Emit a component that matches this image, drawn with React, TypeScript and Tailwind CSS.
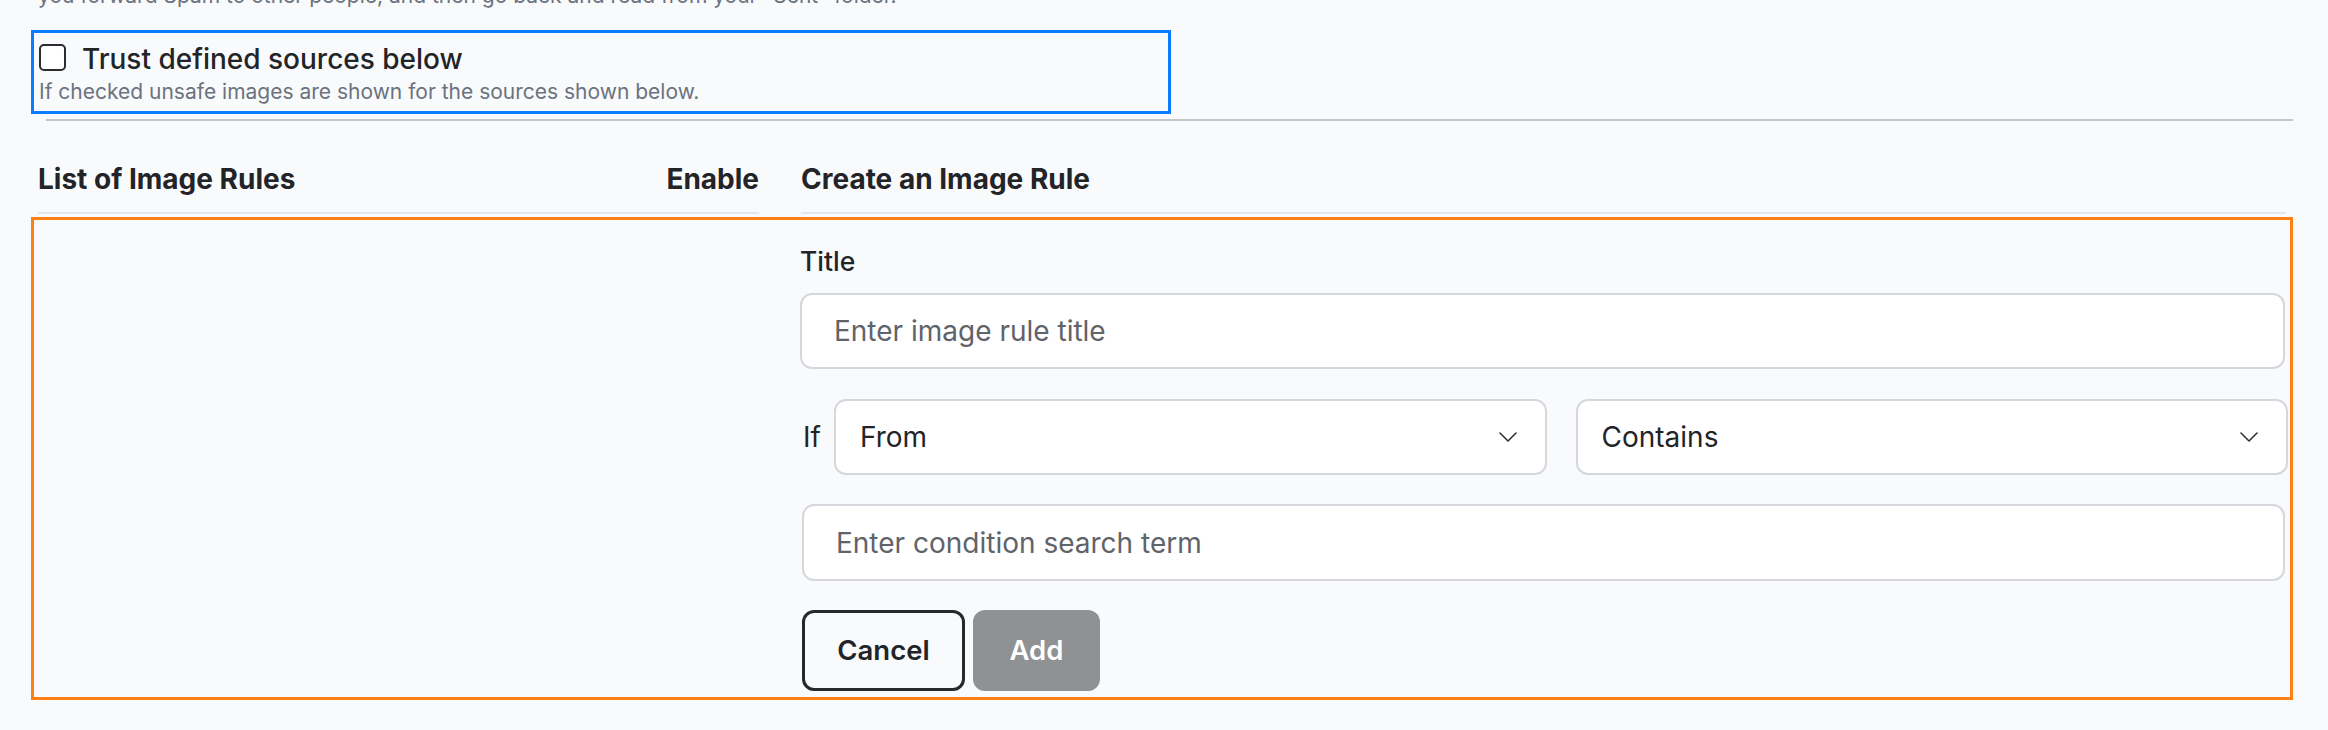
import React from 'react';

function Chevron() {
  return (
    <svg width="18" height="10" viewBox="0 0 18 10" fill="none" className="shrink-0">
      <path d="M1 1 L9 9 L17 1" stroke="#2f3033" strokeWidth="1.6" strokeLinecap="round" strokeLinejoin="round" />
    </svg>
  );
}

function SelectBox({ value }: { value: string }) {
  return (
    <div className="flex h-[76px] flex-1 items-center justify-between rounded-[12px] border-2 border-[#d5d7dc] bg-white pl-[24px] pr-[28px]">
      <span className="text-[28px] text-[#232427]">{value}</span>
      <Chevron />
    </div>
  );
}

export default function App() {
  return (
    <div className="min-h-screen w-full overflow-hidden bg-[#f9fafb] px-[31px] pr-[35px] font-['Inter',sans-serif] text-[#232427]">
      <p className="-mt-[20px] ml-[7px] text-[21px] leading-[31px] whitespace-nowrap text-[#6b7280]">
        you forward Spam to other people, and then go back and read from your "Sent" folder.
      </p>

      {/* trust sources */}
      <div className="mt-[19px] h-[84px] w-[1140px] border-[3px] border-[#0a7cff] pl-[5px]">
        <label className="mt-[8px] flex items-start gap-[16px]">
          <span className="mt-[3px] block h-[27px] w-[27px] shrink-0 rounded-[5px] border-2 border-[#2b2c30] bg-white" />
          <span className="text-[28px] font-medium leading-[36px]">Trust defined sources below</span>
        </label>
        <p className="text-[21px] leading-[30px] text-[#6b7280]">If checked unsafe images are shown for the sources shown below.</p>
      </div>

      <div className="ml-[15px] mt-[5px] h-[2px] bg-[#c4c4c7]" />

      {/* table header */}
      <div className="ml-[7px] mr-[7px] mt-[38px] flex gap-[42px]">
        <div className="flex w-[721px] items-start justify-between border-b-2 border-[#e5e7eb] pb-[13px] text-[28px] font-bold leading-[40px]">
          <span>List of Image Rules</span>
          <span>Enable</span>
        </div>
        <div className="flex-1 border-b-2 border-[#e5e7eb] pb-[13px] text-[28px] font-bold leading-[40px]">
          Create an Image Rule
        </div>
      </div>

      {/* rules + form */}
      <div className="mt-[3px] flex border-[3px] border-[#ff8015] pb-[6px]">
        <div className="w-[766px] shrink-0" />
        <div className="flex-1 pr-[5px] pt-[23px]">
          <div className="text-[26.5px] font-medium leading-[36px]">Title</div>
          <input
            placeholder="Enter image rule title"
            className="mt-[14px] h-[76px] w-full rounded-[12px] border-2 border-[#d5d7dc] bg-white pl-[32px] text-[28px] outline-none placeholder:text-[#5f636a]"
          />
          <div className="-mr-[3px] mt-[30px] flex items-center">
            <span className="ml-[3px] w-[31px] shrink-0 text-[28px]">If</span>
            <div className="flex flex-1 gap-[29px]">
              <SelectBox value="From" />
              <SelectBox value="Contains" />
            </div>
          </div>
          <input
            placeholder="Enter condition search term"
            className="mt-[29px] ml-[2px] h-[77px] w-[calc(100%-2px)] rounded-[12px] border-2 border-[#d5d7dc] bg-white pl-[32px] text-[28px] outline-none placeholder:text-[#5f636a]"
          />
          <div className="mt-[29px] ml-[2px] flex gap-[8px]">
            <button className="h-[81px] w-[163px] rounded-[12px] border-[3px] border-[#27282b] text-[27.5px] font-semibold">
              Cancel
            </button>
            <button className="h-[81px] w-[127px] rounded-[12px] bg-[#909193] text-[27.5px] font-semibold text-white">
              Add
            </button>
          </div>
        </div>
      </div>
    </div>
  );
}
